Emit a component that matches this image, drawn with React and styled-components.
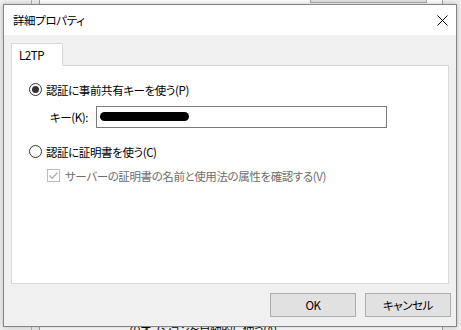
import React from 'react';
import styled, { createGlobalStyle } from 'styled-components';

const GlobalStyle = createGlobalStyle`
  html, body {
    margin: 0;
    padding: 0;
    background: #f0f0f0;
    overflow: hidden;
  }
  body {
    font-family: "Noto Sans CJK JP", "Noto Sans", sans-serif;
    font-size: 11.5px;
    letter-spacing: -0.4px;
    color: #000;
    font-feature-settings: "palt";
  }
`;

const Screen = styled.div`
  position: relative;
  width: 461px;
  height: 330px;
  overflow: hidden;
`;

// window lying behind the dialog, only its edges show
const BackWindow = styled.div`
  position: absolute;
  inset: 0;
  z-index: 0;
`;

const BackPane = styled.div`
  position: absolute;
  left: 39px;
  right: 18px;
  top: 0;
  bottom: 0;
  background: #fff;
  border-left: 1px solid #a0a0a0;
  border-right: 1px solid #a0a0a0;
`;

const BackRule = styled.div`
  position: absolute;
  left: 31px;
  top: 0;
  bottom: 0;
  width: 1px;
  background: #b4b4b4;
`;

const BackButton = styled.div`
  position: absolute;
  left: 310px;
  top: -20px;
  width: 117px;
  height: 23px;
  box-sizing: border-box;
  background: #e1e1e1;
  border: 1px solid #adadad;
`;

const BackText = styled.div`
  position: absolute;
  left: 120px;
  top: 322px;
  white-space: nowrap;
  line-height: 14px;
`;

const Dialog = styled.div`
  position: relative;
  z-index: 1;
  margin: 4px 0 0 3px;
  width: 454px;
  height: 323px;
  box-sizing: border-box;
  border: 1px solid #858585;
  box-shadow: 0 0 5px rgba(0, 0, 0, 0.25);
  background: #f0f0f0;
  display: flex;
  flex-direction: column;
`;

const TitleBar = styled.div`
  height: 30px;
  flex: none;
  background: #fff;
  display: flex;
  align-items: center;
  justify-content: space-between;
  padding: 0 8px 0 9px;
`;

const Title = styled.span`
  line-height: 14px;
  margin-top: -1px;
`;

const CloseIcon = styled.svg`
  display: block;
  width: 11px;
  height: 11px;
`;

const Body = styled.div`
  flex: 1;
  display: flex;
  flex-direction: column;
  padding: 8px 7px 0 7px;
`;

const TabStrip = styled.div`
  display: flex;
  position: relative;
  z-index: 1;
  margin-bottom: -1px;
`;

const Tab = styled.div`
  width: 52px;
  height: 23px;
  box-sizing: border-box;
  border: 1px solid #d9d9d9;
  border-bottom: none;
  background: #fff;
  padding: 4px 0 0 7px;
  line-height: 14px;
`;

const Panel = styled.div`
  height: 219px;
  box-sizing: border-box;
  border: 1px solid #d9d9d9;
  background: #fff;
  padding: 17px 0 0 17px;
  display: flex;
  flex-direction: column;
`;

const Row = styled.div`
  display: flex;
  align-items: center;
  height: ${({ $h }) => $h || 13}px;
  margin-top: ${({ $top }) => $top || 0}px;
  padding-left: ${({ $indent }) => $indent || 0}px;
  color: ${({ $disabled }) => ($disabled ? '#6d6d6d' : '#000')};
  line-height: 14px;
`;

const Radio = styled.span`
  width: 13px;
  height: 13px;
  box-sizing: border-box;
  border: 1px solid #333;
  border-radius: 50%;
  margin-right: 4px;
  display: flex;
  align-items: center;
  justify-content: center;
  flex: none;

  &::after {
    content: '';
    width: 7px;
    height: 7px;
    border-radius: 50%;
    background: #333;
    display: ${({ $checked }) => ($checked ? 'block' : 'none')};
  }
`;

const Check = styled.span`
  width: 13px;
  height: 13px;
  box-sizing: border-box;
  border: 1px solid #bcbcbc;
  margin-right: 5px;
  flex: none;
  display: flex;
  align-items: center;
  justify-content: center;
`;

const FieldLabel = styled.span`
  width: 46px;
  flex: none;
`;

const KeyField = styled.div`
  width: 291px;
  height: 22px;
  box-sizing: border-box;
  border: 1px solid #7a7a7a;
  background: #fff;
  display: flex;
  align-items: center;
  padding-left: 3px;
`;

const Redacted = styled.span`
  width: 89px;
  height: 9px;
  border-radius: 5px;
  background: #000;
  margin-top: -1px;
`;

const Footer = styled.div`
  display: flex;
  justify-content: flex-end;
  gap: 9px;
  margin: 9px -2px 0 0;
`;

const Button = styled.button`
  width: 86px;
  height: 24px;
  box-sizing: border-box;
  border: 1px solid #adadad;
  background: #e1e1e1;
  font: inherit;
  letter-spacing: inherit;
  color: #000;
  padding: 0;
  line-height: 14px;
`;

function App() {
  return (
    <>
      <GlobalStyle />
      <Screen>
        <BackWindow>
          <BackPane />
          <BackRule />
          <BackButton />
          <BackText>このオプションを自動的に使う(A)</BackText>
        </BackWindow>
        <Dialog>
          <TitleBar>
            <Title>詳細プロパティ</Title>
            <CloseIcon viewBox="0 0 11 11">
              <path d="M0.5 0.5 L10.5 10.5 M10.5 0.5 L0.5 10.5" stroke="#000" strokeWidth="1" fill="none" />
            </CloseIcon>
          </TitleBar>
          <Body>
            <TabStrip>
              <Tab>L2TP</Tab>
            </TabStrip>
            <Panel>
              <Row>
                <Radio $checked />
                認証に事前共有キーを使う(P)
              </Row>
              <Row $h={22} $top={10} $indent={21}>
                <FieldLabel>キー(K):</FieldLabel>
                <KeyField>
                  <Redacted />
                </KeyField>
              </Row>
              <Row $top={17}>
                <Radio />
                認証に証明書を使う(C)
              </Row>
              <Row $top={11} $indent={18} $disabled>
                <Check>
                  <svg width="11" height="11" viewBox="0 0 11 11">
                    <path d="M1.5 5.5 L4.2 8.3 L9.5 2.5" stroke="#a8a8a8" strokeWidth="1.2" fill="none" />
                  </svg>
                </Check>
                サーバーの証明書の名前と使用法の属性を確認する(V)
              </Row>
            </Panel>
            <Footer>
              <Button>OK</Button>
              <Button>キャンセル</Button>
            </Footer>
          </Body>
        </Dialog>
      </Screen>
    </>
  );
}

export default App;
